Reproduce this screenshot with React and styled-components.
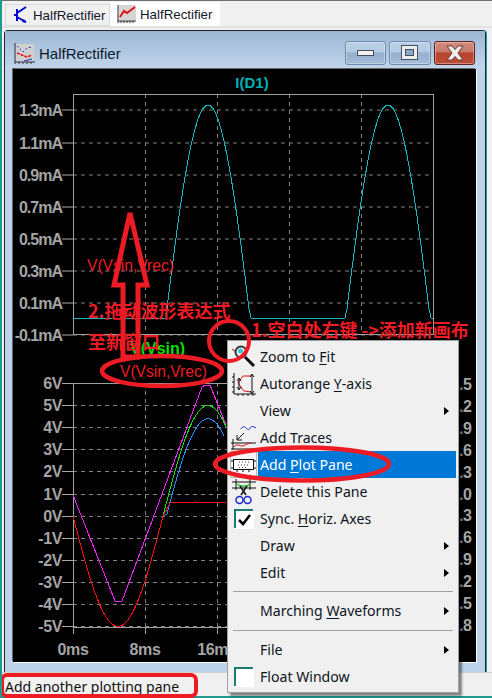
import React from "react";
import styled, { createGlobalStyle } from "styled-components";

const Global = createGlobalStyle`
  html, body { margin: 0; padding: 0; background: #f0f0f0; }
  * { box-sizing: border-box; }
`;

const Page = styled.div`
  position: relative;
  width: 492px;
  height: 698px;
  overflow: hidden;
  background: #f0f0f0;
  border-left: 2px solid #1f9a8c;
  display: flex;
  flex-direction: column;
  font-family: "Liberation Sans", Arial, sans-serif;
`;

const TabBar = styled.div`
  height: 28px;
  flex: none;
  display: flex;
  align-items: flex-start;
  padding: 1px 0 0 3px;
  background: #f0f0f0;
  border-top: 1px solid #707070;
  border-bottom: 2px solid #e2e2e2;
`;

const Tab = styled.div`
  display: flex;
  align-items: center;
  gap: ${(p) => (p.$active ? "3px" : "2px")};
  font-size: 13.3px;
  color: #101828;
  background: ${(p) => (p.$active ? "#ffffff" : "#f0f0f0")};
  height: ${(p) => (p.$active ? "24px" : "22px")};
  margin-top: ${(p) => (p.$active ? "0" : "2px")};
  width: ${(p) => (p.$active ? "110px" : "105px")};
  padding-left: ${(p) => (p.$active ? "6px" : "7px")};
  border: 1px solid ${(p) => (p.$active ? "#ffffff" : "#d9d9d9")};
`;

const Workspace = styled.div`
  flex: 1;
  min-height: 0;
  padding: 2px 6px 0 2px;
  background: #f0f0f0;
  display: flex;
`;

const Win = styled.div`
  flex: 1;
  display: flex;
  flex-direction: column;
  background: #bcd3ea;
  border: 1px solid #20262c;
  border-bottom: 0;
  border-radius: 4px 4px 0 0;
  box-shadow: 1px 0 0 #12a0a8;
  padding: 0 9px 10px 8px;
`;

const TitleBar = styled.div`
  height: 38px;
  margin: 0 -9px 0 -8px;
  padding: 6px 10px 0 9px;
  flex: none;
  display: flex;
  align-items: center;
  gap: 4px;
  background: linear-gradient(#9cb6d3, #c2d6ec);
  font-size: 15px;
  color: #0c1a2b;
`;

const TitleText = styled.span`
  flex: 1;
`;

const Caption = styled.div`
  width: ${(p) => p.$w}px;
  height: 24px;
  margin-left: -1px;
  border-radius: 3px;
  display: flex;
  align-items: center;
  justify-content: center;
  border: 1px solid ${(p) => (p.$close ? "#5b1f1c" : "#6f8cab")};
  box-shadow: inset 0 0 0 1px rgba(255, 255, 255, 0.35);
  background: ${(p) =>
    p.$close
      ? "linear-gradient(#d28c80 0, #c9776b 45%, #b8432d 50%, #bd4d38 100%)"
      : "linear-gradient(#b9cfe6 0, #b4cbe3 45%, #94b0cf 50%, #a4bdd9 100%)"};
`;

const Plot = styled.svg`
  display: block;
  flex: none;
  width: 463px;
  height: 593px;
  background: #000;
  box-shadow: 1px 1px 0 #fff, -1px -1px 0 #666;
`;

const AxisLabel = styled.text`
  font-family: "Liberation Sans", Arial, sans-serif;
  font-weight: 700;
  font-size: 16px;
  letter-spacing: ${(p) => (p.$tight ? "-1px" : "-0.4px")};
  fill: #a4a4a4;
`;

const PaneTitle = styled.text`
  font-family: "Liberation Sans", Arial, sans-serif;
  font-size: ${(p) => (p.$small ? 15 : 16)}px;
  fill: ${(p) => p.$color};
  font-weight: 700;
`;

const StatusBar = styled.div`
  height: 26px;
  flex: none;
  padding: 4px 0 0 3px;
  font-family: "Noto Sans", sans-serif;
  font-size: 14px;
  color: #101010;
  background: #f0f0f0;
  border-top: 1px solid #cfcfcf;
  border-bottom: 2px solid #1f9a8c;
`;

const Menu = styled.div`
  position: absolute;
  left: 225px;
  top: 340px;
  width: 232px;
  height: 353px;
  background: #f0f0f0;
  border: 1px solid #a0a0a0;
  box-shadow: 3px 3px 2px rgba(0, 0, 0, 0.45);
  padding: 2px 2px;
  display: flex;
  flex-direction: column;
`;

const Item = styled.div`
  height: 27px;
  flex: none;
  display: grid;
  grid-template-columns: 28px 1fr 12px;
  align-items: center;
  font-family: "Noto Sans", sans-serif;
  font-size: 14.1px;
  color: #0c1420;
  position: relative;
`;

const IconCell = styled.div`
  width: 27px;
  height: 27px;
  display: flex;
  align-items: center;
  justify-content: center;
  ${(p) => p.$sunken && "border: 1px solid #b8b8b8; background: #f6f6f6;"}
`;

const Label = styled.div`
  height: 27px;
  line-height: 27px;
  padding-left: 2px;
  grid-column: 2 / ${(p) => (p.$hl ? 4 : 3)};
  background: ${(p) => (p.$hl ? "#0078d7" : "transparent")};
  color: ${(p) => (p.$hl ? "#fff" : "inherit")};
  u { text-underline-offset: 2px; }
`;

const Arrow = styled.div`
  width: 0;
  height: 0;
  border-left: 5px solid #000;
  border-top: 4.5px solid transparent;
  border-bottom: 4.5px solid transparent;
`;

const Separator = styled.div`
  height: 1px;
  flex: none;
  margin: ${(p) => p.$m};
  background: #a0a0a0;
`;

const CheckBox = styled.div`
  width: 19px;
  height: 19px;
  background: #fff;
  border-top: 2px solid #1c7a74;
  border-left: 2px solid #1c7a74;
  display: flex;
  align-items: center;
  justify-content: center;
  box-shadow: 1px 1px 0 #fff;
`;

const Overlay = styled.svg`
  position: absolute;
  left: -2px;
  top: 0;
  width: 492px;
  height: 698px;
  pointer-events: none;
`;

const Note = styled.div`
  position: absolute;
  left: ${(p) => p.$x}px;
  top: ${(p) => p.$y}px;
  color: #ed1c24;
  white-space: nowrap;
  font-family: ${(p) => (p.$cjk ? '"Noto Sans CJK SC", sans-serif' : '"Liberation Sans", Arial, sans-serif')};
  font-weight: ${(p) => (p.$cjk ? 700 : 400)};
  font-size: ${(p) => (p.$cjk ? 18 : 15.6)}px;
  line-height: 20px;
`;

const Trace = styled.path`
  fill: none;
  shape-rendering: crispEdges;
  stroke: ${(p) => p.$c};
`;

const range = (a, b, s = 3) => {
  const out = [];
  for (let x = a; x <= b; x += s) out.push(x);
  return out;
};
const sine = (x) => -5 * Math.sin(((x - 73) * Math.PI) / 90);
const vy = (v) => 516 - 22.1 * v;
const toPath = (pts) => pts.map(([x, y], i) => `${i ? "L" : "M"}${x} ${y.toFixed(1)}`).join(" ");

const cyan = toPath(
  range(73, 433, 2).map((x) => {
    const s = -Math.sin(((x - 73) * Math.PI) / 90);
    return [x, 318 - Math.max(0, s - 0.1) * (213 / 0.9)];
  })
);
const green = toPath(range(73, 226).map((x) => [x, vy(sine(x))]));
const magenta = toPath([
  [73, 495],
  [115, 601],
  [122, 601],
  [202, 387],
  [205, 385],
  [210, 385],
  [226, 425],
]);
const red = toPath([
  ...range(73, 163).map((x) => [x, vy(sine(x))]),
  [170, 503],
  [195, 502],
  [226, 502.5],
]);
const blue = toPath([[163, 516], ...range(167, 226).map((x) => [x, vy(Math.max(sine(x) - 0.6, 0))])]);

const upperLabels = [
  ["1.3mA", 110],
  ["1.1mA", 143],
  ["0.9mA", 175],
  ["0.7mA", 207],
  ["0.5mA", 239],
  ["0.3mA", 271],
  ["0.1mA", 303],
  ["-0.1mA", 335],
];
const lowerLabels = ["6V", "5V", "4V", "3V", "2V", "1V", "0V", "-1V", "-2V", "-3V", "-4V", "-5V"];
const rightLabels = [".5", ".2", ".9", ".6", ".3", ".0", ".3", ".6", ".9", ".2", ".5", ".8"];
const vTicks = [145, 217, 289, 361];

const Grid = ({ top, bottom, rows }) => (
  <g>
    {rows.map((y) => (
      <g key={y}>
        <line x1="62" x2="73" y1={y} y2={y} stroke="#a8a8a8" />
        <line x1="73" x2="433" y1={y} y2={y} stroke="#808080" strokeDasharray="4 4" />
      </g>
    ))}
    {vTicks.map((x) => (
      <line key={x} x1={x + 0.5} x2={x + 0.5} y1={top} y2={bottom} stroke="#808080" strokeDasharray="4 4" />
    ))}
    <rect x="73.5" y={top + 0.5} width="360" height={bottom - top} fill="none" stroke="#a0a0a0" />
  </g>
);

const Schematic = () => (
  <svg width="18" height="18" viewBox="0 0 18 18">
    <path d="M4 3v12M1 9h3M4 7l9-6M4 11l9 5" stroke="#0000d0" strokeWidth="2" fill="none" />
    <path d="M13 17l-4-1 2-3z" fill="#0000d0" />
  </svg>
);

const WaveIcon = () => (
  <svg width="20" height="20" viewBox="0 0 20 20">
    <rect x="2" y="1" width="17" height="15" fill="#d5d5d5" />
    <path d="M1 1v16h18M1 17v2M4 17v2M7 17v2M10 17v2M13 17v2M16 17v2" stroke="#222" fill="none" />
    <path d="M3 13l4-6 3 2 4-3 4-3" stroke="#e01010" strokeWidth="2" fill="none" />
  </svg>
);

const PlotWinIcon = () => (
  <svg width="21" height="21" viewBox="0 0 21 21">
    <rect x="2" y="1" width="18" height="17" fill="#d0d0d0" />
    <path d="M1 0v19h20M1 19v2M5 19v2M9 19v2M13 19v2M17 19v2" stroke="#333" fill="none" />
    <path d="M3 3l6 6 4-4 5-1" stroke="#1b2ac8" strokeDasharray="2 2" fill="none" />
    <path d="M3 10l5 2 5 2 5-2" stroke="#e01010" strokeDasharray="3 1" strokeWidth="1.5" fill="none" />
    <path d="M10 18l8-2" stroke="#1b2ac8" fill="none" />
  </svg>
);

const MinGlyph = () => (
  <svg width="18" height="8" viewBox="0 0 18 8">
    <rect x="0.5" y="1.5" width="16" height="5" fill="#f2f2f2" stroke="#3f4f60" />
  </svg>
);
const MaxGlyph = () => (
  <svg width="18" height="16" viewBox="0 0 18 16">
    <rect x="0.5" y="0.5" width="16" height="14" fill="#eee" stroke="#44515f" />
    <rect x="4.5" y="4.5" width="8" height="6" fill="#8ba9c9" stroke="#44515f" />
  </svg>
);
const CloseGlyph = () => (
  <svg width="20" height="16" viewBox="0 0 20 16">
    <path d="M2 1h5l3 3.5L13 1h5l-5 7 5 7h-5l-3-3.5L7 15H2l5-7z" fill="#eee" stroke="#6b3a34" />
  </svg>
);

const ZoomIcon = () => (
  <svg width="26" height="26" viewBox="0 0 26 26">
    <path d="M1 5l4 3M7 13l-2 4" stroke="#e01010" fill="none" />
    <circle cx="10" cy="8" r="5.5" fill="#eaf6f8" stroke="#333" strokeWidth="2" />
    <circle cx="9.5" cy="7" r="2.5" fill="#30c8d8" />
    <path d="M14 13l9 9" stroke="#111" strokeWidth="3" />
  </svg>
);
const AutoIcon = () => (
  <svg width="26" height="26" viewBox="0 0 26 26">
    <path d="M3 2v21h22M1 6h2M1 11h2M1 16h2M1 21h2M7 23v2M12 23v2M17 23v2M22 23v2" stroke="#111" fill="none" />
    <path d="M7 12l5-7h8M7 12l6 8 7 1" stroke="#e01010" fill="none" />
    <path d="M8 8v10M6 10l2-3 2 3M6 16l2 3 2-3M21 4v18M19 6l2-3 2 3M19 20l2 3 2-3" stroke="#111" fill="none" />
  </svg>
);
const TracesIcon = () => (
  <svg width="26" height="26" viewBox="0 0 26 26">
    <path d="M10 4c2-3 3-3 5-1s3 2 4 0 3-2 6 0" stroke="#1b2ac8" fill="none" />
    <path d="M13 8l-7 7M6 10v5h5" stroke="#111" fill="none" />
    <path d="M2 14v11M0 18h25M0 24h25" stroke="#111" fill="none" />
    <path d="M3 22c3-4 5-1 8-1s5-3 9-3" stroke="#e01010" fill="none" />
  </svg>
);
const PaneIcon = () => (
  <svg width="25" height="14" viewBox="0 0 25 14">
    <rect x="2.5" y="1.5" width="20" height="10" fill="#fff" stroke="#111" />
    <path d="M0 3h3M0 10h3M22 3h3M22 10h3M6 12v2M12 12v2M18 12v2" stroke="#111" />
    <path d="M8 4h10M7 7h11M8 9.5h9" stroke="#444" strokeDasharray="1 2" />
  </svg>
);
const ScissorsIcon = () => (
  <svg width="26" height="26" viewBox="0 0 26 26">
    <path d="M1 3h24M1 9h24M5 0v11M19 0v11" stroke="#111" fill="none" />
    <path d="M6 5c3 3 10 3 13 0" stroke="#20c020" strokeWidth="1.5" fill="none" />
    <path d="M9 7l6 9M16 7l-6 9" stroke="#111" strokeWidth="1.5" fill="none" />
    <circle cx="8.5" cy="21" r="3.5" fill="none" stroke="#1b2ac8" strokeWidth="1.5" />
    <circle cx="16.5" cy="21" r="3.5" fill="none" stroke="#1b2ac8" strokeWidth="1.5" />
  </svg>
);
const Tick = () => (
  <svg width="13" height="12" viewBox="0 0 13 12">
    <path d="M1 6l4 4 7-9" stroke="#000" strokeWidth="2.5" fill="none" />
  </svg>
);

const Row = ({ icon, sunken, hl, sub, children }) => (
  <Item>
    <IconCell $sunken={sunken}>{icon}</IconCell>
    <Label $hl={hl}>{children}</Label>
    {sub && <Arrow />}
  </Item>
);

export default function App() {
  return (
    <Page>
      <Global />
      <TabBar>
        <Tab>
          <Schematic />
          HalfRectifier
        </Tab>
        <Tab $active>
          <WaveIcon />
          HalfRectifier
        </Tab>
      </TabBar>
      <Workspace>
        <Win>
          <TitleBar>
            <PlotWinIcon />
            <TitleText>HalfRectifier</TitleText>
            <Caption $w={41}>
              <MinGlyph />
            </Caption>
            <Caption $w={42}>
              <MaxGlyph />
            </Caption>
            <Caption $w={41} $close>
              <CloseGlyph />
            </Caption>
          </TitleBar>
          <Plot viewBox="13 69 463 593">
            <PaneTitle x="252" y="88" textAnchor="middle" $color="#00b0b0" $small>
              I(D1)
            </PaneTitle>
            <Grid top={94} bottom={334} rows={upperLabels.map((l) => l[1])} />
            {upperLabels.map(([t, y]) => (
              <AxisLabel key={t} x="62" y={y + 6} textAnchor="end" $tight>
                {t}
              </AxisLabel>
            ))}
            <Trace d={cyan} $c="#14b8c4" />
            <PaneTitle x="130" y="354" $color="#00e000">
              V(Vsin)
            </PaneTitle>
            <Grid top={383} bottom={627} rows={lowerLabels.map((_, i) => Math.round(383 + i * 22.1) + 0.5)} />
            {lowerLabels.map((t, i) => (
              <AxisLabel key={t} x="62" y={389 + i * 22.1} textAnchor="end">
                {t}
              </AxisLabel>
            ))}
            {[73, 145, 217, 289, 361, 433].map((x) => (
              <line key={x} x1={x + 0.5} x2={x + 0.5} y1="627" y2="634" stroke="#a0a0a0" />
            ))}
            {[
              ["0ms", 73],
              ["8ms", 145],
              ["16ms", 217],
            ].map(([t, x]) => (
              <AxisLabel key={t} x={x} y="655" textAnchor="middle">
                {t}
              </AxisLabel>
            ))}
            {rightLabels.map((t, i) => (
              <AxisLabel key={i} x="459" y={390 + i * 21.9}>
                {t}
              </AxisLabel>
            ))}
            <Trace d={magenta} $c="#ff20ff" />
            <Trace d={blue} $c="#2090ff" />
            <Trace d={green} $c="#10e010" />
            <Trace d={red} $c="#ff1010" />
          </Plot>
        </Win>
      </Workspace>
      <StatusBar>Add another plotting pane</StatusBar>

      <Menu>
        <Row icon={<ZoomIcon />}>
          Zoom to <u>F</u>it
        </Row>
        <Row icon={<AutoIcon />}>
          Autorange <u>Y</u>-axis
        </Row>
        <Row sub>View</Row>
        <Row icon={<TracesIcon />}>Add Traces</Row>
        <Row icon={<PaneIcon />} sunken hl>
          Add <u>P</u>lot Pane
        </Row>
        <Row icon={<ScissorsIcon />}>Delete this Pane</Row>
        <Row
          icon={
            <CheckBox>
              <Tick />
            </CheckBox>
          }
        >
          Sync. <u>H</u>oriz. Axes
        </Row>
        <Row sub>Draw</Row>
        <Row sub>Edit</Row>
        <Separator $m="5px 3px 5px" />
        <Row sub>
          Marching <u>W</u>aveforms
        </Row>
        <Separator $m="6px 3px 5px" />
        <Row sub>File</Row>
        <Row icon={<CheckBox />}>Float Window</Row>
      </Menu>

      <Overlay viewBox="0 0 492 698">
        <g fill="none" stroke="#ed1c24">
          <path d="M130 213L114 285H123V357H138V285H147Z" strokeWidth="5" />
          <circle cx="229" cy="341" r="20" strokeWidth="4" />
          <ellipse cx="162" cy="371" rx="60" ry="15" strokeWidth="4.5" />
          <ellipse cx="302" cy="464" rx="87" ry="16.5" strokeWidth="4.5" />
          <rect x="2" y="675" width="194" height="21" rx="5" strokeWidth="4" />
        </g>
      </Overlay>
      <Note $x={85} $y={256}>V(Vsin,Vrec)</Note>
      <Note $x={86} $y={300} $cjk>2.拖动波形表达式</Note>
      <Note $x={86} $y={331} $cjk>至新窗口</Note>
      <Note $x={118} $y={362}>V(Vsin,Vrec)</Note>
      <Note $x={249} $y={319} $cjk>1.空白处右键 -&gt;添加新画布</Note>
    </Page>
  );
}
